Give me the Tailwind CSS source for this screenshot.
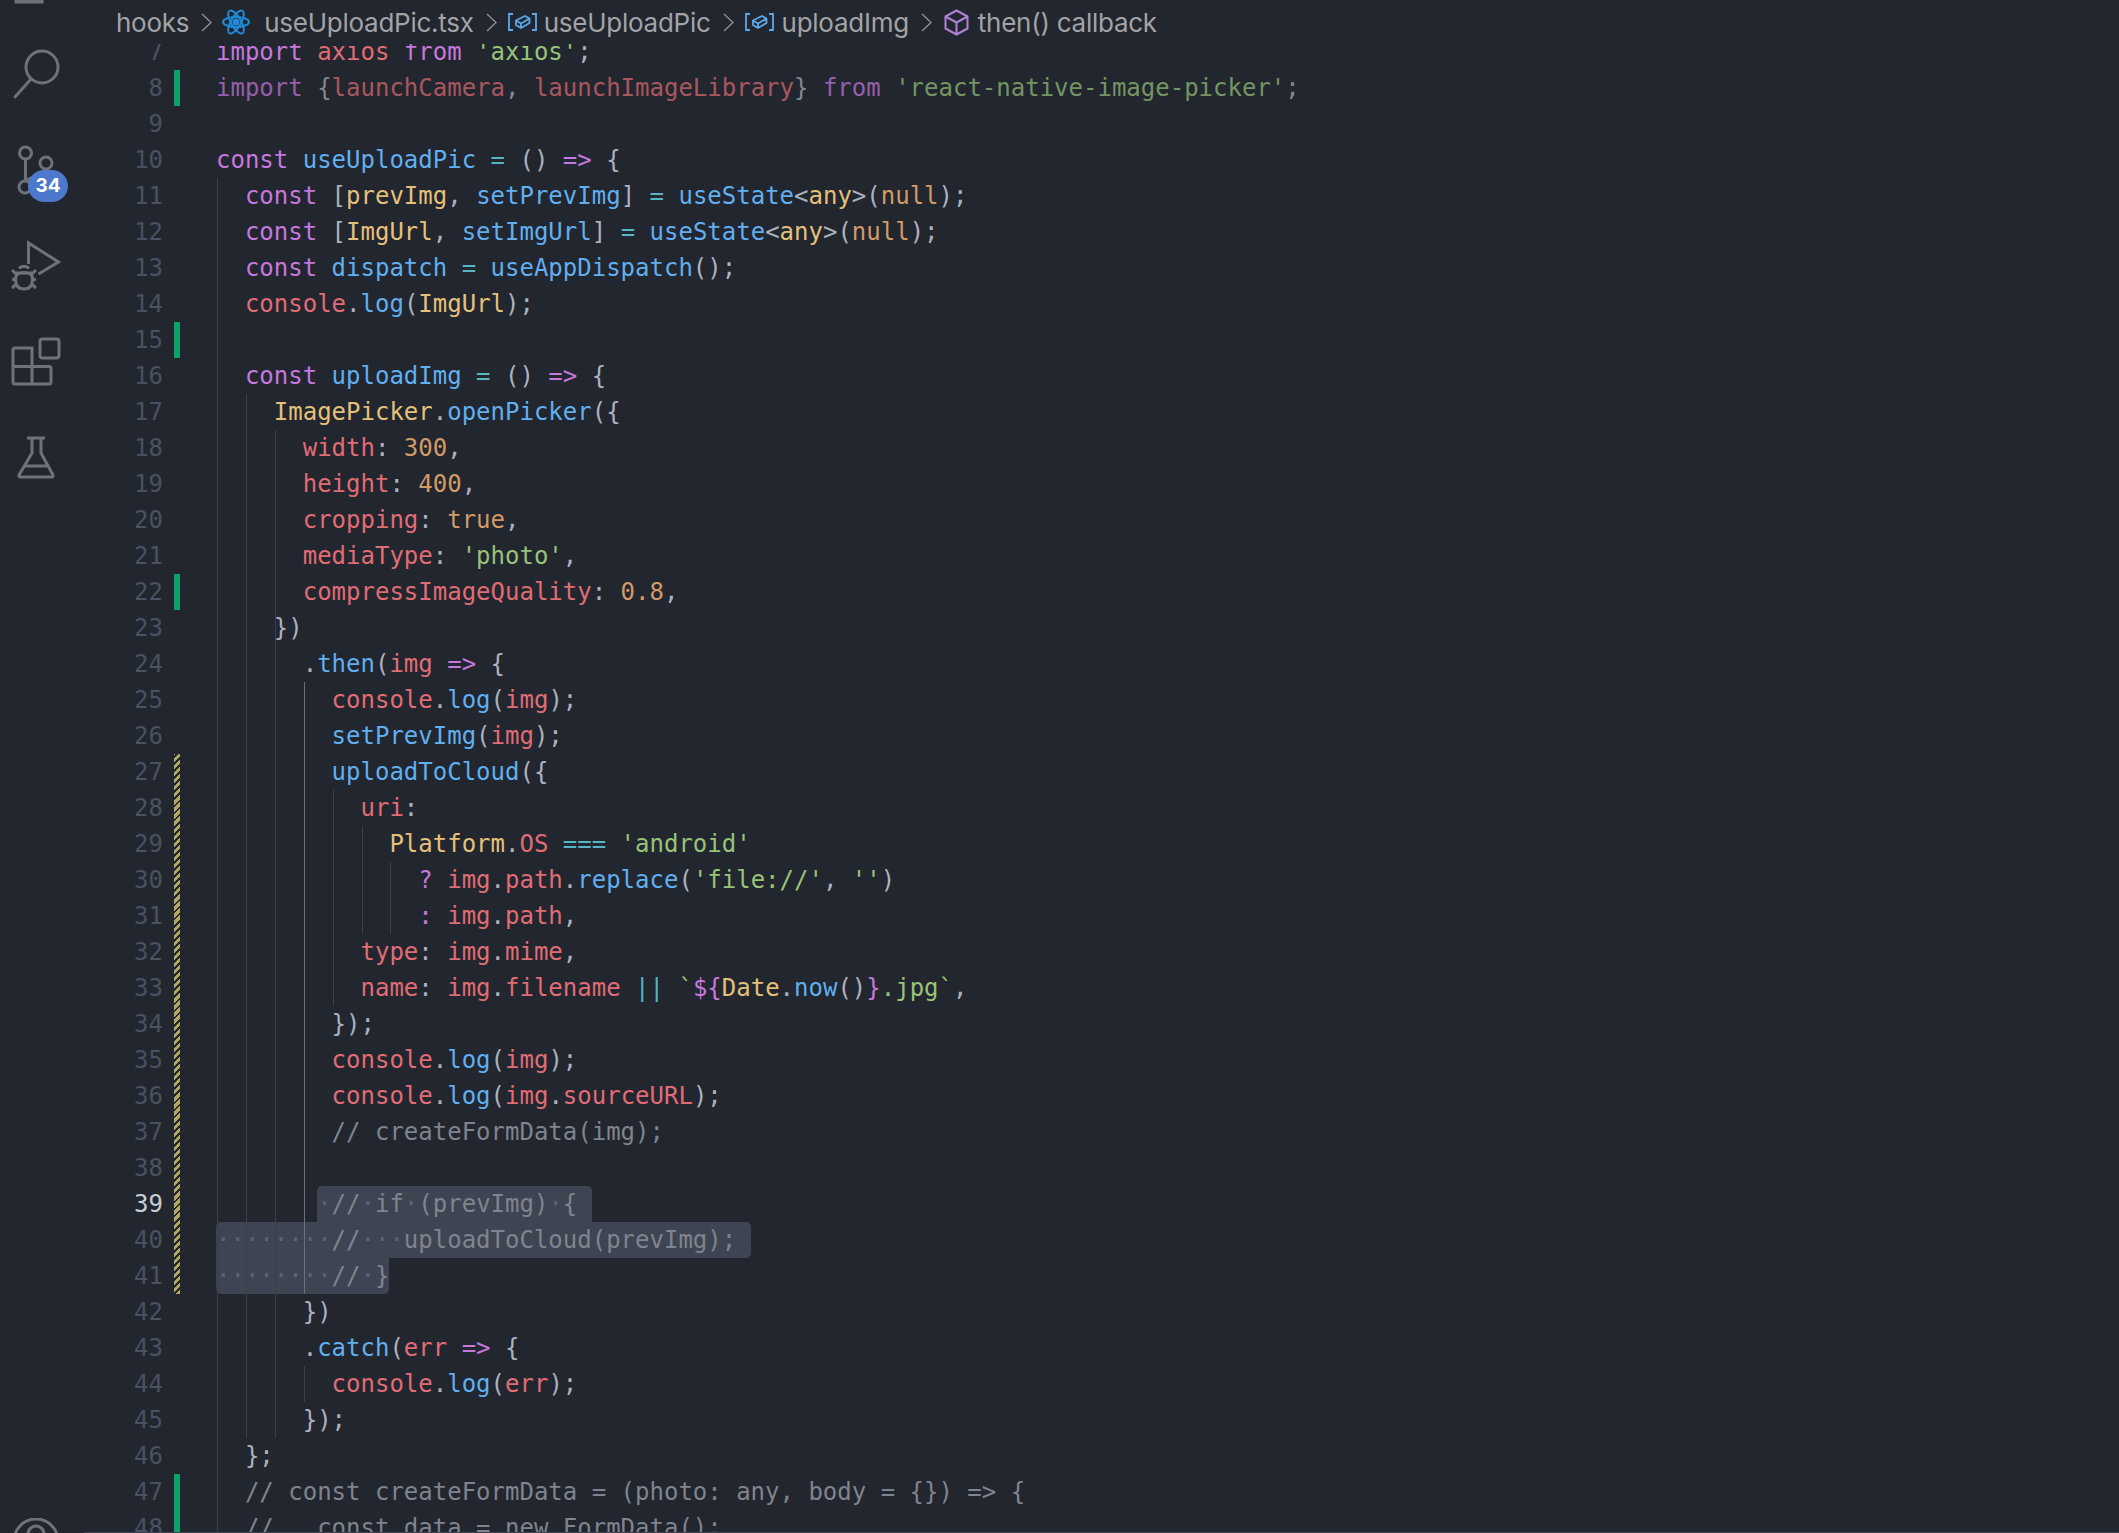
<!DOCTYPE html>
<html lang="en">
<head>
<meta charset="utf-8">
<title>useUploadPic.tsx</title>
<script src="https://cdn.jsdelivr.net/npm/@tailwindcss/browser@4"></script>
</head>
<body class="bg-[#22262e] overflow-hidden">
<div class="flex w-[2119px] h-[1533px] bg-[#22262e]">
  <aside class="w-[84px] shrink-0 flex flex-col text-[#6e737b]">
    <svg class="h-[24px] w-[84px] block" viewBox="0 0 84 24" fill="none" stroke="currentColor" stroke-width="3"><path d="M16 0h26v2H16z"/></svg>
    <svg class="h-[96px] w-[84px] block" viewBox="0 24 84 96" fill="none" stroke="currentColor" stroke-width="3"><circle cx="42" cy="67" r="16"/><path d="M31 79 15 97" stroke-linecap="round"/></svg>
    <div class="relative h-[96px] w-[84px]">
      <svg class="h-[96px] w-[84px] block" viewBox="0 120 84 96" fill="none" stroke="currentColor" stroke-width="3"><circle cx="25.500" cy="153" r="6"/><circle cx="46" cy="163" r="6"/><circle cx="25" cy="187" r="6"/><path d="M25.500 159v22M46 169c0 7-14 6-20 12"/></svg>
      <span class="absolute left-[28px] top-[50px] w-[40px] h-[32px] rounded-full bg-[#4d78cc] text-white text-[19px] font-bold font-['Inter',sans-serif] flex items-center justify-center">34</span>
    </div>
    <svg class="h-[96px] w-[84px] block" viewBox="0 216 84 96" fill="none" stroke="currentColor" stroke-width="3"><path d="M28.500 264v-21l30 19-20 12"/><path d="M19 268.500a6 5 0 0 1 10 0M15.500 279c0-5 3-6.500 8.500-6.500s8.500 1.500 8.500 6.500c0 7-3 10-8.500 10s-8.500-3-8.500-10zM15.500 273h17M12 270l4 4M36 270l-4 4M12 279.500h4M32 279.500h4M12 288l4-3.500M36 288l-4-3.500"/></svg>
    <svg class="h-[96px] w-[84px] block" viewBox="0 312 84 96" fill="none" stroke="currentColor" stroke-width="3"><rect x="40" y="339" width="19" height="19" rx="2.500"/><path d="M15 348h17v36H15a2 2 0 0 1-2-2v-32a2 2 0 0 1 2-2zM32 366.500h17a2 2 0 0 1 2 2V382a2 2 0 0 1-2 2H32M13 366.500h19"/></svg>
    <svg class="h-[96px] w-[84px] block" viewBox="0 408 84 96" fill="none" stroke="currentColor" stroke-width="3" stroke-linejoin="round"><path d="M27 438h18M32 438v15l-13 22a1.500 1.500 0 0 0 1 2h32a1.500 1.500 0 0 0 1-2L41 453v-15M24 466h25"/></svg>
    <div class="mt-auto h-[15px] overflow-hidden">
      <svg class="h-[60px] w-[84px] block" viewBox="0 1518 84 60" fill="none" stroke="currentColor" stroke-width="3"><circle cx="36" cy="1541" r="22"/><circle cx="36" cy="1534" r="8"/></svg>
    </div>
  </aside>

  <main class="flex-1 min-w-0 flex flex-col">
    <nav class="h-[44px] shrink-0 flex items-center pl-[32px] text-[26px] tracking-[-0.26px] text-[#a2a3a6] font-['Inter',sans-serif] whitespace-nowrap">
      <span>hooks</span>
      <svg class="ml-[12px] w-[11px] h-[19px]" viewBox="0 0 11 19" fill="none" stroke="#8a8d93" stroke-width="1.500"><path d="M1 1l9 8.500-9 8.500"/></svg>
      <svg class="ml-[10px] w-[28px] h-[26px]" viewBox="-14 -13 28 26" fill="none" stroke="#1f8ad8" stroke-width="2"><ellipse rx="13" ry="5"/><ellipse rx="13" ry="5" transform="rotate(60)"/><ellipse rx="13" ry="5" transform="rotate(120)"/><circle r="2.500" fill="#1f8ad8"/></svg>
      <span class="ml-[14px]">useUploadPic.tsx</span>
      <svg class="ml-[12px] w-[11px] h-[19px]" viewBox="0 0 11 19" fill="none" stroke="#8a8d93" stroke-width="1.500"><path d="M1 1l9 8.500-9 8.500"/></svg>
      <svg class="ml-[11px] w-[29px] h-[18px]" viewBox="0 0 29 18" fill="none" stroke="#5aa9ef" stroke-width="1.800"><path d="M5 1H1v16h4M24 1h4v16h-4M8 7.500 17 3l4.500 2.500v4.500L13 15l-5-3zM8 7.500l5 3 8.500-5M13 10.500V15"/></svg>
      <span class="ml-[7px]">useUploadPic</span>
      <svg class="ml-[12px] w-[11px] h-[19px]" viewBox="0 0 11 19" fill="none" stroke="#8a8d93" stroke-width="1.500"><path d="M1 1l9 8.500-9 8.500"/></svg>
      <svg class="ml-[11px] w-[29px] h-[18px]" viewBox="0 0 29 18" fill="none" stroke="#5aa9ef" stroke-width="1.800"><path d="M5 1H1v16h4M24 1h4v16h-4M8 7.500 17 3l4.500 2.500v4.500L13 15l-5-3zM8 7.500l5 3 8.500-5M13 10.500V15"/></svg>
      <span class="ml-[8px]">uploadImg</span>
      <svg class="ml-[12px] w-[11px] h-[19px]" viewBox="0 0 11 19" fill="none" stroke="#8a8d93" stroke-width="1.500"><path d="M1 1l9 8.500-9 8.500"/></svg>
      <svg class="ml-[12px] w-[25px] h-[27px]" viewBox="0 0 25 27" fill="none" stroke="#b180d7" stroke-width="2" stroke-linejoin="round"><path d="M12.500 1.500 23.500 7.500v12L12.500 25.500 1.500 19.500v-12zM1.500 7.500 12.500 13.500 23.500 7.500M12.500 13.500v12"/></svg>
      <span class="ml-[9px]">then() callback</span>
    </nav>

    <section class="flex-1 min-h-0 overflow-hidden border-b border-[#3e4452]">
      <div class="relative mt-[-10px] text-[24px] leading-9 text-[#abb2bf] font-['DejaVu_Sans_Mono','Liberation_Mono',monospace]">
        <div class="absolute left-[133px] top-[144px] h-[1400px] w-px bg-[#3b4048]"></div>
        <div class="absolute left-[162px] top-[360px] h-[1044px] w-px bg-[#3b4048]"></div>
        <div class="absolute left-[191px] top-[396px] h-[1008px] w-px bg-[#3b4048]"></div>
        <div class="absolute left-[220px] top-[648px] h-[612px] w-px bg-[#6a6f78]"></div>
        <div class="absolute left-[220px] top-[1332px] h-[36px] w-px bg-[#3b4048]"></div>
        <div class="absolute left-[249px] top-[756px] h-[216px] w-px bg-[#3b4048]"></div>
        <div class="absolute left-[278px] top-[792px] h-[108px] w-px bg-[#3b4048]"></div>
        <div class="absolute left-[306px] top-[828px] h-[72px] w-px bg-[#3b4048]"></div>
        <div class="absolute left-[90px] top-[36px] h-[36px] w-[6px] bg-[#0f9f69]"></div>
        <div class="absolute left-[90px] top-[288px] h-[36px] w-[6px] bg-[#0f9f69]"></div>
        <div class="absolute left-[90px] top-[540px] h-[36px] w-[6px] bg-[#0f9f69]"></div>
        <div class="absolute left-[90px] top-[1440px] h-[72px] w-[6px] bg-[#0f9f69]"></div>
        <div class="absolute left-[90px] top-[720px] h-[540px] w-[6px] bg-[repeating-linear-gradient(-45deg,#b3a562_0,#b3a562_3px,transparent_3px,transparent_5px)]"></div>

        <div class="flex h-9"><span class="w-[79px] text-right text-[#495162]">7</span><span class="ml-[53px] whitespace-pre"><span class="text-[#c678dd]">import</span> <span class="text-[#e06c75]">axios</span> <span class="text-[#c678dd]">from</span> <span class="text-[#98c379]">'axios'</span>;</span></div>
        <div class="flex h-9"><span class="w-[79px] text-right text-[#495162]">8</span><span class="ml-[53px] whitespace-pre opacity-70"><span class="text-[#c678dd]">import</span> {<span class="text-[#e06c75]">launchCamera</span>, <span class="text-[#e06c75]">launchImageLibrary</span>} <span class="text-[#c678dd]">from</span> <span class="text-[#98c379]">'react-native-image-picker'</span>;</span></div>
        <div class="flex h-9"><span class="w-[79px] text-right text-[#495162]">9</span></div>
        <div class="flex h-9"><span class="w-[79px] text-right text-[#495162]">10</span><span class="ml-[53px] whitespace-pre"><span class="text-[#c678dd]">const</span> <span class="text-[#61afef]">useUploadPic</span> <span class="text-[#56b6c2]">=</span> () <span class="text-[#c678dd]">=&gt;</span> {</span></div>
        <div class="flex h-9"><span class="w-[79px] text-right text-[#495162]">11</span><span class="ml-[53px] whitespace-pre">  <span class="text-[#c678dd]">const</span> [<span class="text-[#e5c07b]">prevImg</span>, <span class="text-[#61afef]">setPrevImg</span>] <span class="text-[#56b6c2]">=</span> <span class="text-[#61afef]">useState</span>&lt;<span class="text-[#e5c07b]">any</span>&gt;(<span class="text-[#d19a66]">null</span>);</span></div>
        <div class="flex h-9"><span class="w-[79px] text-right text-[#495162]">12</span><span class="ml-[53px] whitespace-pre">  <span class="text-[#c678dd]">const</span> [<span class="text-[#e5c07b]">ImgUrl</span>, <span class="text-[#61afef]">setImgUrl</span>] <span class="text-[#56b6c2]">=</span> <span class="text-[#61afef]">useState</span>&lt;<span class="text-[#e5c07b]">any</span>&gt;(<span class="text-[#d19a66]">null</span>);</span></div>
        <div class="flex h-9"><span class="w-[79px] text-right text-[#495162]">13</span><span class="ml-[53px] whitespace-pre">  <span class="text-[#c678dd]">const</span> <span class="text-[#61afef]">dispatch</span> <span class="text-[#56b6c2]">=</span> <span class="text-[#61afef]">useAppDispatch</span>();</span></div>
        <div class="flex h-9"><span class="w-[79px] text-right text-[#495162]">14</span><span class="ml-[53px] whitespace-pre">  <span class="text-[#e06c75]">console</span>.<span class="text-[#61afef]">log</span>(<span class="text-[#e5c07b]">ImgUrl</span>);</span></div>
        <div class="flex h-9"><span class="w-[79px] text-right text-[#495162]">15</span></div>
        <div class="flex h-9"><span class="w-[79px] text-right text-[#495162]">16</span><span class="ml-[53px] whitespace-pre">  <span class="text-[#c678dd]">const</span> <span class="text-[#61afef]">uploadImg</span> <span class="text-[#56b6c2]">=</span> () <span class="text-[#c678dd]">=&gt;</span> {</span></div>
        <div class="flex h-9"><span class="w-[79px] text-right text-[#495162]">17</span><span class="ml-[53px] whitespace-pre">    <span class="text-[#e5c07b]">ImagePicker</span>.<span class="text-[#61afef]">openPicker</span>({</span></div>
        <div class="flex h-9"><span class="w-[79px] text-right text-[#495162]">18</span><span class="ml-[53px] whitespace-pre">      <span class="text-[#e06c75]">width</span>: <span class="text-[#d19a66]">300</span>,</span></div>
        <div class="flex h-9"><span class="w-[79px] text-right text-[#495162]">19</span><span class="ml-[53px] whitespace-pre">      <span class="text-[#e06c75]">height</span>: <span class="text-[#d19a66]">400</span>,</span></div>
        <div class="flex h-9"><span class="w-[79px] text-right text-[#495162]">20</span><span class="ml-[53px] whitespace-pre">      <span class="text-[#e06c75]">cropping</span>: <span class="text-[#d19a66]">true</span>,</span></div>
        <div class="flex h-9"><span class="w-[79px] text-right text-[#495162]">21</span><span class="ml-[53px] whitespace-pre">      <span class="text-[#e06c75]">mediaType</span>: <span class="text-[#98c379]">'photo'</span>,</span></div>
        <div class="flex h-9"><span class="w-[79px] text-right text-[#495162]">22</span><span class="ml-[53px] whitespace-pre">      <span class="text-[#e06c75]">compressImageQuality</span>: <span class="text-[#d19a66]">0.8</span>,</span></div>
        <div class="flex h-9"><span class="w-[79px] text-right text-[#495162]">23</span><span class="ml-[53px] whitespace-pre">    })</span></div>
        <div class="flex h-9"><span class="w-[79px] text-right text-[#495162]">24</span><span class="ml-[53px] whitespace-pre">      .<span class="text-[#61afef]">then</span>(<span class="text-[#e06c75]">img</span> <span class="text-[#c678dd]">=&gt;</span> {</span></div>
        <div class="flex h-9"><span class="w-[79px] text-right text-[#495162]">25</span><span class="ml-[53px] whitespace-pre">        <span class="text-[#e06c75]">console</span>.<span class="text-[#61afef]">log</span>(<span class="text-[#e06c75]">img</span>);</span></div>
        <div class="flex h-9"><span class="w-[79px] text-right text-[#495162]">26</span><span class="ml-[53px] whitespace-pre">        <span class="text-[#61afef]">setPrevImg</span>(<span class="text-[#e06c75]">img</span>);</span></div>
        <div class="flex h-9"><span class="w-[79px] text-right text-[#495162]">27</span><span class="ml-[53px] whitespace-pre">        <span class="text-[#61afef]">uploadToCloud</span>({</span></div>
        <div class="flex h-9"><span class="w-[79px] text-right text-[#495162]">28</span><span class="ml-[53px] whitespace-pre">          <span class="text-[#e06c75]">uri</span>:</span></div>
        <div class="flex h-9"><span class="w-[79px] text-right text-[#495162]">29</span><span class="ml-[53px] whitespace-pre">            <span class="text-[#e5c07b]">Platform</span>.<span class="text-[#e06c75]">OS</span> <span class="text-[#56b6c2]">===</span> <span class="text-[#98c379]">'android'</span></span></div>
        <div class="flex h-9"><span class="w-[79px] text-right text-[#495162]">30</span><span class="ml-[53px] whitespace-pre">              <span class="text-[#c678dd]">?</span> <span class="text-[#e06c75]">img</span>.<span class="text-[#e06c75]">path</span>.<span class="text-[#61afef]">replace</span>(<span class="text-[#98c379]">'file://'</span>, <span class="text-[#98c379]">''</span>)</span></div>
        <div class="flex h-9"><span class="w-[79px] text-right text-[#495162]">31</span><span class="ml-[53px] whitespace-pre">              <span class="text-[#c678dd]">:</span> <span class="text-[#e06c75]">img</span>.<span class="text-[#e06c75]">path</span>,</span></div>
        <div class="flex h-9"><span class="w-[79px] text-right text-[#495162]">32</span><span class="ml-[53px] whitespace-pre">          <span class="text-[#e06c75]">type</span>: <span class="text-[#e06c75]">img</span>.<span class="text-[#e06c75]">mime</span>,</span></div>
        <div class="flex h-9"><span class="w-[79px] text-right text-[#495162]">33</span><span class="ml-[53px] whitespace-pre">          <span class="text-[#e06c75]">name</span>: <span class="text-[#e06c75]">img</span>.<span class="text-[#e06c75]">filename</span> <span class="text-[#56b6c2]">||</span> <span class="text-[#98c379]">`</span><span class="text-[#c678dd]">${</span><span class="text-[#e5c07b]">Date</span>.<span class="text-[#61afef]">now</span>()<span class="text-[#c678dd]">}</span><span class="text-[#98c379]">.jpg`</span>,</span></div>
        <div class="flex h-9"><span class="w-[79px] text-right text-[#495162]">34</span><span class="ml-[53px] whitespace-pre">        });</span></div>
        <div class="flex h-9"><span class="w-[79px] text-right text-[#495162]">35</span><span class="ml-[53px] whitespace-pre">        <span class="text-[#e06c75]">console</span>.<span class="text-[#61afef]">log</span>(<span class="text-[#e06c75]">img</span>);</span></div>
        <div class="flex h-9"><span class="w-[79px] text-right text-[#495162]">36</span><span class="ml-[53px] whitespace-pre">        <span class="text-[#e06c75]">console</span>.<span class="text-[#61afef]">log</span>(<span class="text-[#e06c75]">img</span>.<span class="text-[#e06c75]">sourceURL</span>);</span></div>
        <div class="flex h-9"><span class="w-[79px] text-right text-[#495162]">37</span><span class="ml-[53px] whitespace-pre text-[#7f848e]">        // createFormData(img);</span></div>
        <div class="flex h-9"><span class="w-[79px] text-right text-[#495162]">38</span></div>
        <div class="flex h-9"><span class="w-[79px] text-right text-[#c8ccd4]">39</span><span class="ml-[53px] whitespace-pre text-[#7f848e]">       <span class="inline-block h-9 bg-[#3e4452] rounded-t-[5px]"><span class="text-[#5d6474]">·</span>//<span class="text-[#5d6474]">·</span>if<span class="text-[#5d6474]">·</span>(prevImg)<span class="text-[#5d6474]">·</span>{<span class="text-[#5d6474]"> </span></span></span></div>
        <div class="flex h-9"><span class="w-[79px] text-right text-[#495162]">40</span><span class="ml-[53px] whitespace-pre text-[#7f848e]"><span class="inline-block h-9 bg-[#3e4452] rounded-tl-[5px] rounded-r-[5px]"><span class="text-[#5d6474]">········</span>//<span class="text-[#5d6474]">···</span>uploadToCloud(prevImg);<span class="text-[#5d6474]"> </span></span></span></div>
        <div class="flex h-9"><span class="w-[79px] text-right text-[#495162]">41</span><span class="ml-[53px] whitespace-pre text-[#7f848e]"><span class="inline-block h-9 bg-[#3e4452] rounded-b-[5px]"><span class="text-[#5d6474]">········</span>//<span class="text-[#5d6474]">·</span>}</span></span></div>
        <div class="flex h-9"><span class="w-[79px] text-right text-[#495162]">42</span><span class="ml-[53px] whitespace-pre">      })</span></div>
        <div class="flex h-9"><span class="w-[79px] text-right text-[#495162]">43</span><span class="ml-[53px] whitespace-pre">      .<span class="text-[#61afef]">catch</span>(<span class="text-[#e06c75]">err</span> <span class="text-[#c678dd]">=&gt;</span> {</span></div>
        <div class="flex h-9"><span class="w-[79px] text-right text-[#495162]">44</span><span class="ml-[53px] whitespace-pre">        <span class="text-[#e06c75]">console</span>.<span class="text-[#61afef]">log</span>(<span class="text-[#e06c75]">err</span>);</span></div>
        <div class="flex h-9"><span class="w-[79px] text-right text-[#495162]">45</span><span class="ml-[53px] whitespace-pre">      });</span></div>
        <div class="flex h-9"><span class="w-[79px] text-right text-[#495162]">46</span><span class="ml-[53px] whitespace-pre">  };</span></div>
        <div class="flex h-9"><span class="w-[79px] text-right text-[#495162]">47</span><span class="ml-[53px] whitespace-pre text-[#7f848e]">  // const createFormData = (photo: any, body = {}) =&gt; {</span></div>
        <div class="flex h-9"><span class="w-[79px] text-right text-[#495162]">48</span><span class="ml-[53px] whitespace-pre text-[#7f848e]">  //   const data = new FormData();</span></div>
      </div>
    </section>
  </main>
</div>
</body>
</html>
